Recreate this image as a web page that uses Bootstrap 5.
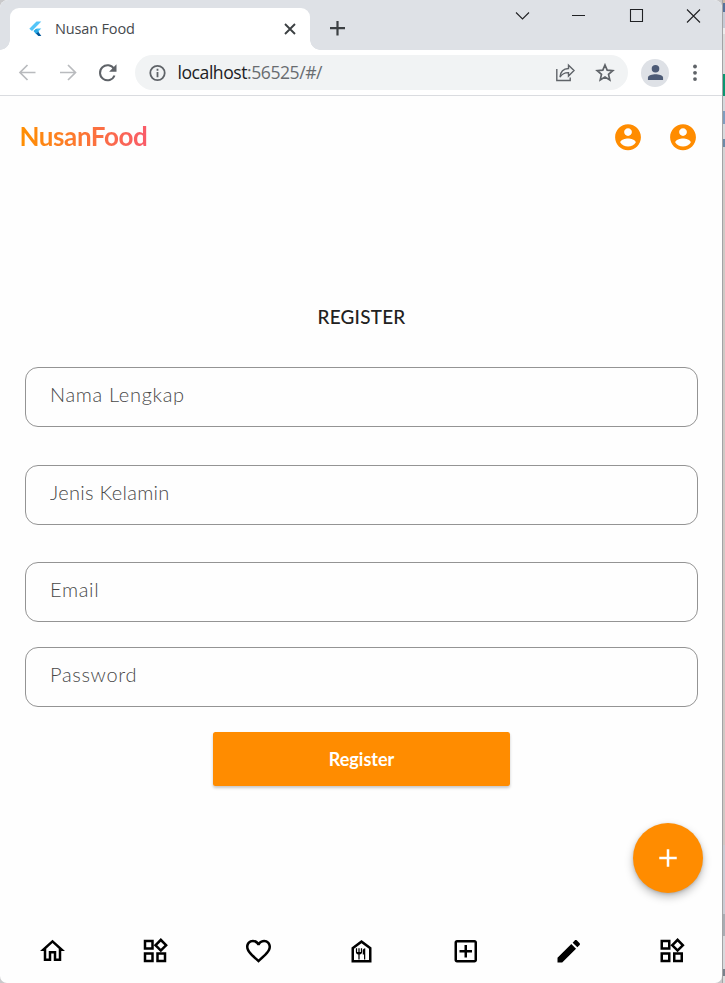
<!DOCTYPE html>
<html lang="id">
<head>
<meta charset="utf-8">
<meta name="viewport" content="width=device-width, initial-scale=1">
<title>Nusan Food</title>
<link href="https://cdn.jsdelivr.net/npm/bootstrap@5.3.0/dist/css/bootstrap.min.css" rel="stylesheet">
<style>
body{width:725px;height:983px;overflow:hidden;font-family:"Open Sans","Noto Sans",sans-serif;background:#fff}
svg{display:block;flex:none}
.desk{height:983px;background:#c9c9cb}
.win{width:722px;height:983px;background:#fefefe;border-radius:8px 8px 7px 7px;overflow:hidden}
.edge{width:3px;border-left:1px solid #a3a3a5;background:linear-gradient(#cdb9a4 0 3px,#56719b 3px 12px,#c5cad5 12px 28px,#ececec 28px 34px,#dadada 34px 74px,#0a9670 74px 96px,#d6d8dc 96px 111px,#7f9dbf 111px 124px,#d8dadd 124px 139px,#6c8aa8 139px 147px,#d4d3d4 147px 180px,#cfc9c5 180px 500px,#d0c8c4 500px 845px,#cbccd4 845px 914px,#a9adb3 914px 936px,#d9dadd 936px 969px,#78818b 969px 976px,#ddd 976px)}
.tabstrip{height:50px;background:#dee1e6}
.tab-shape{width:300px;height:42px;margin:8px 0 0 10px;background:#fff;border-radius:9px 9px 0 0;padding:0 13px 0 17px;position:relative}
.tab-shape::before,.tab-shape::after{content:"";position:absolute;bottom:0;width:10px;height:10px}
.tab-shape::before{left:-10px;background:radial-gradient(circle at 0 0,transparent 9.5px,#fff 10px)}
.tab-shape::after{right:-10px;background:radial-gradient(circle at 100% 0,transparent 9.5px,#fff 10px)}
.tab-title{font-size:14.5px;color:#45494d;margin-left:10px;letter-spacing:-.15px;font-weight:400}
.toolbar{height:46px;border-bottom:1px solid #dadce0;background:#fff;padding:0 18px 0 17px}
.omni{width:493px;height:35px;margin-left:17px;background:#f1f3f4;padding:0 12px 0 13px}
.url{font-size:17.6px;color:#686c70;margin-left:11.5px;letter-spacing:-.46px}
.url b{font-weight:400;color:#202124}
.avatar{width:28px;height:28px;background:#dee1e6;margin-left:13px}
.appbar{height:82px;padding:0 24px 0 20px}
.accounts{color:#ff8c00}
.brand{font-family:Lato,"Open Sans",sans-serif;font-weight:700;font-size:26px;letter-spacing:-.4px;line-height:32px;margin:0 0 2px -.6px;background:linear-gradient(90deg,#ff9000,#f95b69);-webkit-background-clip:text;background-clip:text;color:transparent}
.form-zone{padding:127px 24px 0 25px;height:719px}
.heading{font-family:Lato,sans-serif;font-size:18.9px;line-height:24px;color:#212121;font-weight:500;margin:0 0 38px;letter-spacing:.25px}
.field{height:60px;border:1.3px solid #949494;border-radius:13px;padding:0 24px 6px;font-family:Lato,sans-serif;font-size:20px;background:transparent;color:#333}
.field::placeholder{color:#484848;opacity:1;font-weight:300;letter-spacing:.68px}
.field.narrow::placeholder{letter-spacing:.3px}
.gap-wide{margin-bottom:37.5px}
.gap-tight{margin-bottom:25px}
.send{width:297px;height:54px;background:#ff8c00;border:0;border-radius:2.5px;color:#fff;font-family:Lato,sans-serif;font-weight:700;font-size:18px;box-shadow:0 2px 3px rgba(0,0,0,.22);padding:0}
.send:hover{background:#ff8c00;color:#fff}
.fab{position:absolute;left:633px;top:823px;width:70px;height:70px;background:#ff8c00;border:0;box-shadow:0 4px 8px rgba(0,0,0,.26),0 1px 3px rgba(0,0,0,.14)}
.bottom{height:64px;width:723px}
</style>
<script src="https://cdn.jsdelivr.net/npm/bootstrap@5.3.0/dist/js/bootstrap.bundle.min.js"></script>
</head>
<body>
<svg width="0" height="0" class="position-absolute" aria-hidden="true">
<symbol id="user" viewBox="0 0 24 24"><path d="M12 2C6.48 2 2 6.48 2 12s4.48 10 10 10 10-4.48 10-10S17.52 2 12 2zm0 3c1.66 0 3 1.34 3 3s-1.34 3-3 3-3-1.34-3-3 1.34-3 3-3zm0 14.2c-2.5 0-4.71-1.28-6-3.22.03-1.99 4-3.08 6-3.08 1.99 0 5.97 1.09 6 3.08-1.29 1.94-3.5 3.22-6 3.22z"/></symbol>
<symbol id="widgets" viewBox="0 0 24 24"><path d="M16.66 4.52l2.83 2.83-2.83 2.83-2.83-2.83 2.83-2.83M9 5v4H5V5h4m10 10v4h-4v-4h4M9 15v4H5v-4h4m7.66-13.31L11 7.34 16.66 13l5.66-5.66-5.66-5.65zM11 3H3v8h8V3zm10 10h-8v8h8v-8zm-10 0H3v8h8v-8z"/></symbol>
</svg>
<div class="desk d-flex position-relative">
<main class="win d-flex flex-column">
  <header class="tabstrip d-flex align-items-start flex-shrink-0">
    <div class="tab-shape d-flex align-items-center">
      <svg width="18" height="18" viewBox="0 0 18 18"><path d="M9.500 1.500h4.800L5 11 2.300 8.800z" fill="#54c5f8"/><path d="M9.800 8.500h4.500L9.600 13 7 10.800z" fill="#45bdf0"/><path d="M6.500 11l2.700-2.200 3 3.200-3 2.300z" fill="#29a9e5"/><path d="M9 13.500l2.500-1.500 2.800 4h-3z" fill="#01579b"/></svg>
      <span class="tab-title">Nusan Food</span>
      <svg class="ms-auto" width="14" height="14" viewBox="0 0 14 14" stroke="#3c4043" stroke-width="1.900"><path d="M2 2l10 10M12 2L2 12"/></svg>
    </div>
    <svg width="16" height="16" viewBox="0 0 16 16" stroke="#3c4043" stroke-width="2.200" style="margin:20px 0 0 19px"><path d="M8.500 1v14.500M1 8.200h15"/></svg>
    <svg class="ms-auto" width="207" height="32" viewBox="515 0 207 32" fill="none" stroke="#202124" stroke-width="1.100"><path d="M516 12.500l6.500 6.500 6.500-6.500M572 15.500h13M687 9.500l13 13M700 9.500l-13 13"/><path d="M630.500 9.500h12v12h-12z"/></svg>
  </header>
  <nav class="toolbar d-flex align-items-center flex-shrink-0" aria-label="Browser">
    <svg width="101" height="30" viewBox="17 57.500 101 30" fill="none" stroke="#b9bbbe" stroke-width="1.700"><path d="M35.500 72H20.500M27.500 64.500L20 72l7.500 7.500M60 72h15M68 64.500l7.500 7.500-7.500 7.500"/><path d="M114 68.500A7.500 7.500 0 1 0 114.500 75" stroke="#5f6368" stroke-width="2"/><path d="M116.500 63.800v7.400h-7.400z" fill="#5f6368" stroke="none"/></svg>
    <div class="omni rounded-pill d-flex align-items-center">
      <svg width="18" height="18" viewBox="0 0 18 18" fill="none" stroke="#5f6368" stroke-width="1.800"><circle cx="9.500" cy="9" r="7.200"/><path d="M9.500 8v5.200M9.500 4.800v1.900"/></svg>
      <span class="url"><b>localhost</b>:56525/#/</span>
      <svg class="ms-auto" width="62" height="24" viewBox="554 61 62 24" fill="none" stroke="#5f6368" stroke-width="1.400"><path d="M556.800 69v11.500h13.400v-3M560 77c.5-5.500 3.500-8.300 8.500-8.500v-3.300l5.500 5.300-5.500 5.500v-3.400c-4-.1-6.500 1.400-8.500 4.400z"/><path stroke-width="1.700" d="M605 65l2.200 5.200 5.600.5-4.300 3.700 1.300 5.500-4.800-2.900-4.800 2.900 1.300-5.500-4.300-3.700 5.600-.5z"/></svg>
    </div>
    <div class="avatar rounded-circle d-flex justify-content-center align-items-center"><svg width="17" height="17" viewBox="0 0 18 18" fill="#4d5b76"><circle cx="9" cy="5" r="4"/><path d="M1 17v-2.500C1 11.800 6 10.800 9 10.800s8 1 8 3.700V17z"/></svg></div>
    <svg class="ms-auto" width="18" height="20" viewBox="0 0 18 20" fill="#5f6368"><circle cx="9" cy="3.500" r="1.900"/><circle cx="9" cy="9.800" r="1.900"/><circle cx="9" cy="16.100" r="1.900"/></svg>
  </nav>
  <div class="appbar d-flex align-items-center flex-shrink-0">
    <div class="brand">NusanFood</div>
    <div class="accounts ms-auto d-flex gap-4"><svg width="31" height="31" viewBox="-.4 .2 24 24" fill="currentColor"><use href="#user" width="24" height="24"/></svg><svg width="31" height="31" viewBox="-.4 .2 24 24" fill="currentColor"><use href="#user" width="24" height="24"/></svg></div>
  </div>
  <form class="form-zone flex-shrink-0" onsubmit="return false">
    <h1 class="heading text-center">REGISTER</h1>
    <input class="field d-block w-100 gap-wide" placeholder="Nama Lengkap" aria-label="Nama Lengkap">
    <input class="field narrow d-block w-100 gap-wide" placeholder="Jenis Kelamin" aria-label="Jenis Kelamin">
    <input class="field d-block w-100 gap-tight" type="email" placeholder="Email" aria-label="Email">
    <input class="field d-block w-100 gap-tight" type="password" placeholder="Password" aria-label="Password">
    <button class="btn send d-block mx-auto">Register</button>
  </form>
  <footer class="bottom d-flex align-items-center flex-shrink-0 mt-auto">
    <div class="row g-0 w-100 flex-nowrap">
      <div class="col d-flex justify-content-center"><svg width="30" height="30" viewBox="-.4 0 24 24"><path d="M12 5.690l5 4.500V18h-2v-6H9v6H7v-7.810l5-4.500M12 3L2 12h3v8h6v-6h2v6h6v-8h3L12 3z"/></svg></div>
      <div class="col d-flex justify-content-center"><svg width="30" height="30"><use href="#widgets"/></svg></div>
      <div class="col d-flex justify-content-center"><svg width="30" height="30" viewBox="-.4 0 24 24"><path d="M16.500 3c-1.740 0-3.410.81-4.500 2.090C10.910 3.810 9.240 3 7.500 3 4.420 3 2 5.420 2 8.500c0 3.780 3.400 6.860 8.550 11.540L12 21.350l1.450-1.320C18.600 15.360 22 12.280 22 8.500 22 5.420 19.580 3 16.500 3zm-4.400 15.550l-.1.100-.1-.1C7.140 14.240 4 11.390 4 8.500 4 6.500 5.500 5 7.500 5c1.540 0 3.040.99 3.570 2.360h1.870C13.460 5.990 14.960 5 16.500 5c2 0 3.500 1.500 3.500 3.500 0 2.890-3.140 5.740-7.900 10.050z"/></svg></div>
      <div class="col d-flex justify-content-center"><svg width="30" height="30" viewBox="-.4 -.2 24 24"><path d="M12 5.500l6 4.500v9H6v-9l6-4.500M12 3L4 9v12h16V9l-8-6zm-.5 6.500v3h-1v-3h-1v3h-1v-3h-1v3c0 1.100.9 2 2 2v4h1v-4c1.100 0 2-.9 2-2v-3h-1zm1.500 2v3h1v4h1v-9c-1.100 0-2 .9-2 2z"/></svg></div>
      <div class="col d-flex justify-content-center"><svg width="30" height="30" viewBox="-.6 -.2 24 24"><path d="M19 3H5c-1.110 0-2 .9-2 2v14c0 1.100.89 2 2 2h14c1.100 0 2-.9 2-2V5c0-1.100-.9-2-2-2zm0 16H5V5h14v14zm-8-2h2v-4h4v-2h-4V7h-2v4H7v2h4z"/></svg></div>
      <div class="col d-flex justify-content-center"><svg width="30" height="30" viewBox="-.6 -.2 24 24"><path d="M3 17.250V21h3.750L17.810 9.940l-3.750-3.750L3 17.250zM20.710 7.040c.39-.39.39-1.020 0-1.410l-2.340-2.340c-.39-.39-1.020-.39-1.410 0l-1.830 1.830 3.750 3.750 1.830-1.830z"/></svg></div>
      <div class="col d-flex justify-content-center"><svg width="30" height="30" viewBox="-.6 0 24 24"><use href="#widgets" width="24" height="24"/></svg></div>
    </div>
  </footer>
</main>
<div class="edge"></div>
<button class="fab rounded-circle d-flex align-items-center justify-content-center" aria-label="Tambah"><svg width="30" height="30" viewBox="0 0 24 24" fill="#fff"><path d="M19 13h-6v6h-2v-6H5v-2h6V5h2v6h6v2z"/></svg></button>
</div>
</body>
</html>
